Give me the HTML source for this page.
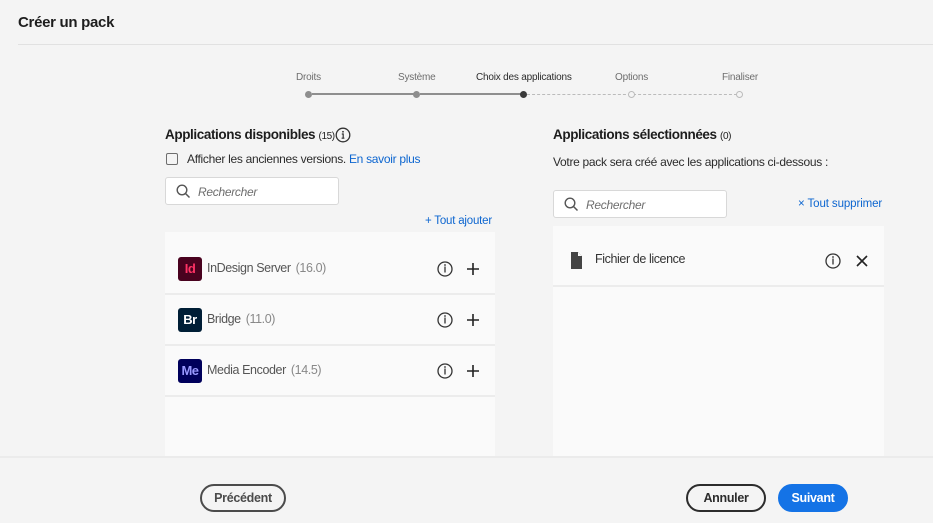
<!DOCTYPE html>
<html><head><meta charset="utf-8"><style>
*{box-sizing:border-box;margin:0;padding:0}
body{width:933px;height:523px;background:#f4f4f4;font-family:"Liberation Sans",sans-serif;color:#2c2c2c;position:relative;overflow:hidden;font-size:12px}
.a{position:absolute;white-space:nowrap}
.title{left:18px;top:14px;font-size:15px;font-weight:bold;color:#1d1d1d;letter-spacing:-0.3px}
.hl{left:18px;right:0;top:44px;height:1px;background:#e1e1e1}
.step{top:72px;font-size:10px;color:#6e6e6e;letter-spacing:-0.2px}
.dot{width:7px;height:7px;border-radius:50%;background:#8e8e8e;top:91px}
.odot{width:7px;height:7px;border-radius:50%;border:1px solid #bbb;background:#f4f4f4;top:91px}
.line{height:2px;background:#8e8e8e;top:93px}
.dline{height:0;border-top:1px dashed #bbb;top:94px}
h2{font-size:13.5px;font-weight:bold;color:#1d1d1d;letter-spacing:-0.4px}
h2 small{font-weight:normal;font-size:10px}
.search{height:28px;border:1px solid #d8d8d8;background:#fff;border-radius:3px}
.search span{position:absolute;left:32px;top:7px;font-style:italic;color:#6e6e6e;font-size:12px;letter-spacing:-0.3px}
.panel{background:#fafafa}
.row{position:absolute;left:0;right:0;height:51px;border-bottom:2px solid #ececec}
.ic{position:absolute;left:13px;top:13px;width:24px;height:24px;border-radius:3px;color:#fff;font-weight:bold;font-size:13px;text-align:center;line-height:24px;letter-spacing:-0.5px}
.nm{position:absolute;left:42px;top:17px;font-size:12.5px;color:#555;letter-spacing:-0.4px}
.nm span{color:#888;margin-left:5px}
.btn{height:28px;border:2px solid #4b4b4b;border-radius:14px;font-size:12.5px;font-weight:bold;text-align:center;line-height:24px;color:#4b4b4b;letter-spacing:-0.3px}
</style></head><body>
<div class="a title">Créer un pack</div>
<div class="a hl"></div>

<div class="a step" style="left:296px">Droits</div>
<div class="a step" style="left:398px">Système</div>
<div class="a step" style="left:476px;color:#2c2c2c">Choix des applications</div>
<div class="a step" style="left:615px">Options</div>
<div class="a step" style="left:722px">Finaliser</div>
<div class="a line" style="left:312px;width:102px"></div>
<div class="a line" style="left:420px;width:102px"></div>
<div class="a dline" style="left:527px;width:210px"></div>
<div class="a dot" style="left:305px"></div>
<div class="a dot" style="left:413px"></div>
<div class="a dot" style="left:520px;background:#3a3a3a"></div>
<div class="a odot" style="left:628px"></div>
<div class="a odot" style="left:736px"></div>

<h2 class="a" style="left:165px;top:127px">Applications disponibles <small>(15)</small></h2>
<svg class="a" style="left:335px;top:127px" width="16" height="16" viewBox="0 0 16 16"><circle cx="8" cy="8" r="6.8" fill="none" stroke="#333" stroke-width="1.3"/><circle cx="8" cy="4.8" r="0.9" fill="#333"/><path d="M6.8 7h1.4v4.2M6.6 11.2h2.8" stroke="#333" stroke-width="1.2" fill="none"/></svg>
<div class="a" style="left:166px;top:153px;width:12px;height:12px;border:1.5px solid #6e6e6e;border-radius:2px"></div>
<div class="a" style="left:187px;top:152px;font-size:12px;letter-spacing:-0.3px">Afficher les anciennes versions. <span style="color:#0d66d0">En savoir plus</span></div>
<div class="a search" style="left:165px;top:177px;width:174px"><svg class="a" style="left:10px;top:6px" width="15" height="15" viewBox="0 0 15 15"><circle cx="6" cy="6" r="4.8" fill="none" stroke="#555" stroke-width="1.4"/><path d="M9.5 9.5l4 4" stroke="#555" stroke-width="1.5"/></svg><span>Rechercher</span></div>
<div class="a" style="left:425px;top:215px;color:#0d66d0;font-size:11.5px;letter-spacing:-0.2px">+ Tout ajouter</div>

<div class="a panel" style="left:165px;top:232px;width:330px;height:224px">
 <div class="row" style="top:12px"><div class="ic" style="background:#49021f;color:#ff3366">Id</div><div class="nm">InDesign Server<span>(16.0)</span></div></div>
 <div class="row" style="top:63px"><div class="ic" style="background:#001e36;color:#fff">Br</div><div class="nm">Bridge<span>(11.0)</span></div></div>
 <div class="row" style="top:114px"><div class="ic" style="background:#00005b;color:#9999ff">Me</div><div class="nm">Media Encoder<span>(14.5)</span></div></div>
</div>
<svg class="a" style="left:0;top:0" width="933" height="523">
 <g fill="none" stroke="#333" stroke-width="1.3">
  <circle cx="445" cy="269" r="7"/><circle cx="445" cy="320" r="7"/><circle cx="445" cy="371" r="7"/>
  <circle cx="833" cy="261" r="7"/>
 </g>
 <g stroke="#333" stroke-width="1.3" fill="none">
  <path d="M445 266.5v6M445 317.5v6M445 368.5v6M833 258.5v6"/>
 </g>
 <g fill="#333"><circle cx="445" cy="265" r="0.9"/><circle cx="445" cy="316" r="0.9"/><circle cx="445" cy="367" r="0.9"/><circle cx="833" cy="257" r="0.9"/></g>
 <g stroke="#222" stroke-width="1.6"><path d="M473 263v12M467 269h12M473 314v12M467 320h12M473 365v12M467 371h12"/><path d="M857 256l10 10M867 256l-10 10"/></g>
 <path d="M571 252h7l4 4v13h-11z" fill="#444"/><path d="M578 252v4h4" fill="#fafafa"/>
</svg>

<h2 class="a" style="left:553px;top:127px">Applications sélectionnées <small>(0)</small></h2>
<div class="a" style="left:553px;top:155px;font-size:12px;letter-spacing:-0.3px">Votre pack sera créé avec les applications ci-dessous :</div>
<div class="a search" style="left:553px;top:190px;width:174px"><svg class="a" style="left:10px;top:6px" width="15" height="15" viewBox="0 0 15 15"><circle cx="6" cy="6" r="4.8" fill="none" stroke="#555" stroke-width="1.4"/><path d="M9.5 9.5l4 4" stroke="#555" stroke-width="1.5"/></svg><span>Rechercher</span></div>
<div class="a" style="left:798px;top:198px;color:#0d66d0;font-size:11.5px;letter-spacing:-0.1px">× Tout supprimer</div>
<div class="a panel" style="left:553px;top:226px;width:331px;height:230px;z-index:-1">
 <div class="row" style="top:0;height:61px"><div class="nm" style="left:42px;top:26px;color:#333">Fichier de licence</div></div>
</div>

<div class="a" style="left:0;right:0;top:456px;height:67px;background:#f4f4f4;border-top:2px solid #ebebeb"></div>
<div class="a btn" style="left:200px;top:484px;width:86px">Précédent</div>
<div class="a btn" style="left:686px;top:484px;width:80px;border-color:#2c2c2c;color:#2c2c2c">Annuler</div>
<div class="a btn" style="left:778px;top:484px;width:70px;background:#1473e6;border-color:#1473e6;color:#fff">Suivant</div>
</body></html>
